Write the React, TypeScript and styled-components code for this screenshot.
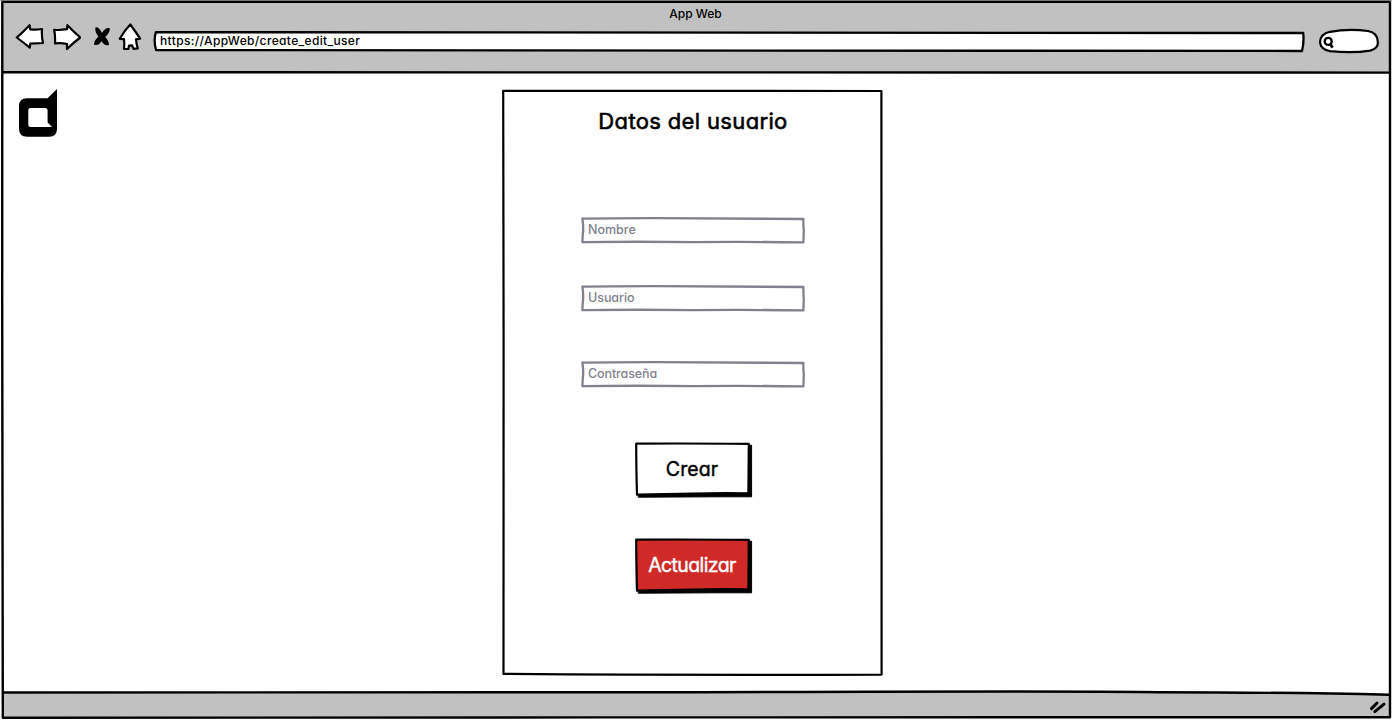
import React from "react";
import styled, { createGlobalStyle } from "styled-components";

const GlobalStyle = createGlobalStyle`
  * { box-sizing: border-box; }
  html, body { margin: 0; background: #fff; }
  body { overflow: hidden; }
`;

const ink = "#000";
const muted = "#81818f";
const chrome = "#c1c1c1";

const Window = styled.div`
  position: relative;
  display: flex;
  flex-direction: column;
  width: 1392px;
  height: 720px;
  padding: 2px;
  color: ${ink};
  font-family: Inter, "Liberation Sans", sans-serif;
  font-feature-settings: "cv11" 1, "calt" 0;
`;

const Outline = styled.svg`
  position: absolute;
  inset: 0;
  width: 100%;
  height: 100%;
  overflow: visible;
  pointer-events: none;
  fill: none;
  stroke: currentColor;
  stroke-linejoin: round;
  stroke-linecap: round;
`;

const Text = styled.span<{ $size: number; $tracking?: number; $weight?: number; $stroke?: number }>`
  position: relative;
  font-size: ${(p) => p.$size}px;
  line-height: 1;
  letter-spacing: ${(p) => p.$tracking ?? 0}px;
  font-weight: ${(p) => p.$weight ?? 500};
  -webkit-text-stroke: ${(p) => p.$stroke ?? 0}px currentColor;
  stroke-linejoin: round;
  white-space: nowrap;
`;

const Header = styled.header`
  height: 70px;
  background: ${chrome};
`;

const TitleBar = styled.div`
  display: flex;
  justify-content: center;
  height: 24px;
  padding: 6px 1px 0 0;
`;

const Toolbar = styled.div`
  display: flex;
  align-items: flex-start;
  height: 30px;
  padding-left: 13px;
`;

const NavIcon = styled.svg<{ $gap: number }>`
  flex: none;
  margin-right: ${(p) => p.$gap}px;
  margin-top: -5px;
  fill: #fff;
  stroke: ${ink};
  stroke-width: 2.2;
  stroke-linejoin: round;
  stroke-linecap: round;
`;

const AddressBar = styled.div`
  position: relative;
  display: flex;
  align-items: center;
  width: 1151px;
  height: 21px;
  margin-top: 5px;
  padding: 0 0 2px 7px;
`;

const SearchBox = styled.svg`
  margin: 2px 0 0 14px;
  stroke: ${ink};
  stroke-width: 2.2;
  fill: #fff;
`;

const Body = styled.main`
  display: flex;
  align-items: flex-start;
  height: 620px;
`;

const Logo = styled.svg`
  flex: none;
  margin: 17px 0 0 17px;
`;

const Card = styled.section`
  position: relative;
  display: flex;
  flex-direction: column;
  align-items: center;
  width: 380px;
  height: 585px;
  margin: 18px 0 0 445px;
`;

const Heading = styled.h1`
  display: flex;
  margin: 0;
  height: 127px;
  padding: 20px 0 0 2px;
  font-weight: inherit;
`;

const Field = styled.label<{ $gap: number }>`
  position: relative;
  display: flex;
  align-items: center;
  width: 223px;
  height: 26px;
  margin-bottom: ${(p) => p.$gap}px;
  padding: 1px 0 0 7.5px;
  color: ${muted};
`;

const Button = styled.button<{ $primary?: boolean }>`
  position: relative;
  display: flex;
  align-items: center;
  justify-content: center;
  width: 118px;
  height: 55px;
  margin: 0 0 41px 4px;
  padding: 1px 4px 0 0;
  border: 0;
  background: none;
  font-family: inherit;
  font-feature-settings: inherit;
  color: ${(p) => (p.$primary ? "#fff" : ink)};
`;

const Footer = styled.footer`
  position: relative;
  display: flex;
  justify-content: flex-end;
  height: 25px;
  padding: 6px 3px 0 0;
  background: ${chrome};
`;

const FieldBox = ({ text, gap, tracking }: { text: string; gap: number; tracking: number }) => (
  <Field $gap={gap}>
    <Outline viewBox="0 0 223 26" strokeWidth="2.3">
      <path d="M1.4 1.7 Q40 1 75 1.1 T222.4 2 Q222.2 9 222.8 14 L222.4 25.4 Q160 24.6 113 25.2 Q55 24.3 1.4 25.2 Q1.6 18 2.2 13 Q2.2 6 1.4 1.7Z" />
    </Outline>
    <Text $size={12.5} $tracking={tracking}>{text}</Text>
  </Field>
);

const SketchButton = ({ text, primary, tracking }: { text: string; primary?: boolean; tracking: number }) => (
  <Button $primary={primary}>
    <Outline viewBox="0 0 118 55">
      <path d="M3 4 L116.6 3.2 V54.8 L80 54.8 L3.6 55.2 Z" fill={ink} stroke={ink} strokeWidth="1" />
      <path
        d="M1.2 1.7 Q50 1.2 113.8 1.9 L113.4 51.4 Q85 50.9 58 51.6 Q25 52.2 2 52.6 Q1.2 25 1.2 1.7Z"
        fill={primary ? "#cf2a27" : "#fff"}
        stroke={ink}
        strokeWidth="2.2"
      />
    </Outline>
    <Text $size={19.5} $tracking={tracking} $weight={400} $stroke={0.4}>{text}</Text>
  </Button>
);

export default function App() {
  return (
    <>
      <GlobalStyle />
      <Window>
        <Header>
          <TitleBar>
            <Text $size={12}>App Web</Text>
          </TitleBar>
          <Toolbar>
            <NavIcon $gap={8} width="29" height="30" viewBox="0 0 29 30">
              <path d="M1.8 16.5 Q8 11 14.6 4.2 L15.2 8.4 Q21 8.8 27 8 Q26.4 15 28 22 L15.3 22.6 L14.8 26.7 Q9 22 1.8 16.5Z" />
            </NavIcon>
            <NavIcon $gap={12} width="29" height="30" viewBox="0 0 29 30">
              <path d="M2.2 8.8 Q8 9.4 15 8.2 L15.4 4.2 Q21 10 28.3 16.5 Q21 22 15 28 V23 Q9 21.6 3 22.4 Q3.4 15 2.2 8.8Z" />
            </NavIcon>
            <NavIcon $gap={7} width="18" height="30" viewBox="0 0 18 30">
              <path
                d="M2.5 6.3 Q6 5.6 9 12 Q12.5 6 16.8 7.2 Q17.4 11 12.2 16 Q16 20 16 23.9 Q12 25.6 8.4 20.2 Q5.5 25 1.2 23.8 Q0 21 5.4 15.6 Q1.6 11 2.5 6.3Z"
                fill={ink}
                stroke="none"
              />
            </NavIcon>
            <NavIcon $gap={11} width="24" height="30" viewBox="0 0 24 30">
              <path d="M12.3 3.5 Q17 10 22.2 17.6 L18 18.3 Q18.3 23 19.8 27.4 L15.5 27.8 L14 24.4 L11 24.7 L10.4 28 L6 27.8 Q6.6 23 6 18.2 L1.8 17.8 Q6.4 9.5 12.3 3.5Z" />
            </NavIcon>
            <AddressBar>
              <Outline viewBox="0 0 1151 21" strokeWidth="2.3">
                <path d="M2.8 1.2 Q600 .7 1150.2 2 Q1151.2 11 1149 20 Q500 20.3 3 19 Q.4 9.5 2.8 1.2Z" fill="#fff" />
              </Outline>
              <Text $size={12} $tracking={0.36}>https://AppWeb/create_edit_user</Text>
            </AddressBar>
            <SearchBox width="62" height="26" viewBox="0 0 62 26">
              <path d="M12 3.8 Q30 .6 50 3 Q60 5 59.8 14 Q60.5 20.5 52 22.6 Q35 25.5 12 23.2 Q2.5 21.5 2 14 Q2.5 6 12 3.8Z" />
              <circle cx="10.2" cy="13.4" r="3.5" strokeWidth="2.3" />
              <path d="M12.2 16 L14.6 19.6" strokeWidth="2.8" />
            </SearchBox>
          </Toolbar>
        </Header>
        <Body>
          <Logo width="38" height="48" viewBox="0 0 38 48">
            <path
              fillRule="evenodd"
              d="M38 0 V40 Q38 47.7 30 47.7 H8 Q0 47.7 0 40 V17 Q0 9.2 8 9.2 H28.5Z M11.5 19 H26 Q28.6 19 28.6 21.5 V33.5 L33 38 H12 Q9.3 38 9.3 35.5 V21 Q9.3 19 11.5 19Z"
            />
          </Logo>
          <Card>
            <Outline viewBox="0 0 380 585" strokeWidth="2.2">
              <path d="M1.2 .8 Q190 .1 379.4 1 Q379 330 379.6 584.6 Q180 585.3 1.5 583.9 Q1 400 1.6 250 Q1.8 100 1.2 .8Z" />
            </Outline>
            <Heading>
              <Text $size={22} $weight={400} $stroke={0.6} $tracking={0.35}>Datos del usuario</Text>
            </Heading>
            <FieldBox text="Nombre" gap={42} tracking={0} />
            <FieldBox text="Usuario" gap={50} tracking={-0.05} />
            <FieldBox text="Contraseña" gap={55} tracking={-0.1} />
            <SketchButton text="Crear" tracking={0.1} />
            <SketchButton text="Actualizar" tracking={-0.6} primary />
          </Card>
        </Body>
        <Footer>
          <svg width="18" height="17" viewBox="0 0 18 17" stroke={ink} strokeWidth="3" strokeLinecap="round">
            <path d="M2.5 10.6 L8 5 M5.8 13.6 L15 6.2" />
          </svg>
        </Footer>
        <Outline viewBox="0 0 1392 720" strokeWidth="2.4">
          <path d="M0 .3 H1392" stroke="#858c85" strokeWidth="1" />
          <path d="M3 692 Q500 693.4 700 692 T1160 692 Q1290 692.2 1389 695 V690 H3Z" fill="#fff" stroke="none" />
          <path d="M2.3 1.9 H1390 V717.2 Q700 718.4 600 717.4 Q300 716.4 2.8 717.8 Q1.6 500 2.2 300 Q2.6 100 2.3 1.9Z" />
          <path d="M3 72.2 Q700 73 1389 72.6" />
          <path d="M3 692.5 Q300 693.6 700 692.2 T1160 692.2 Q1290 692.4 1389 694.8" />
        </Outline>
      </Window>
    </>
  );
}
